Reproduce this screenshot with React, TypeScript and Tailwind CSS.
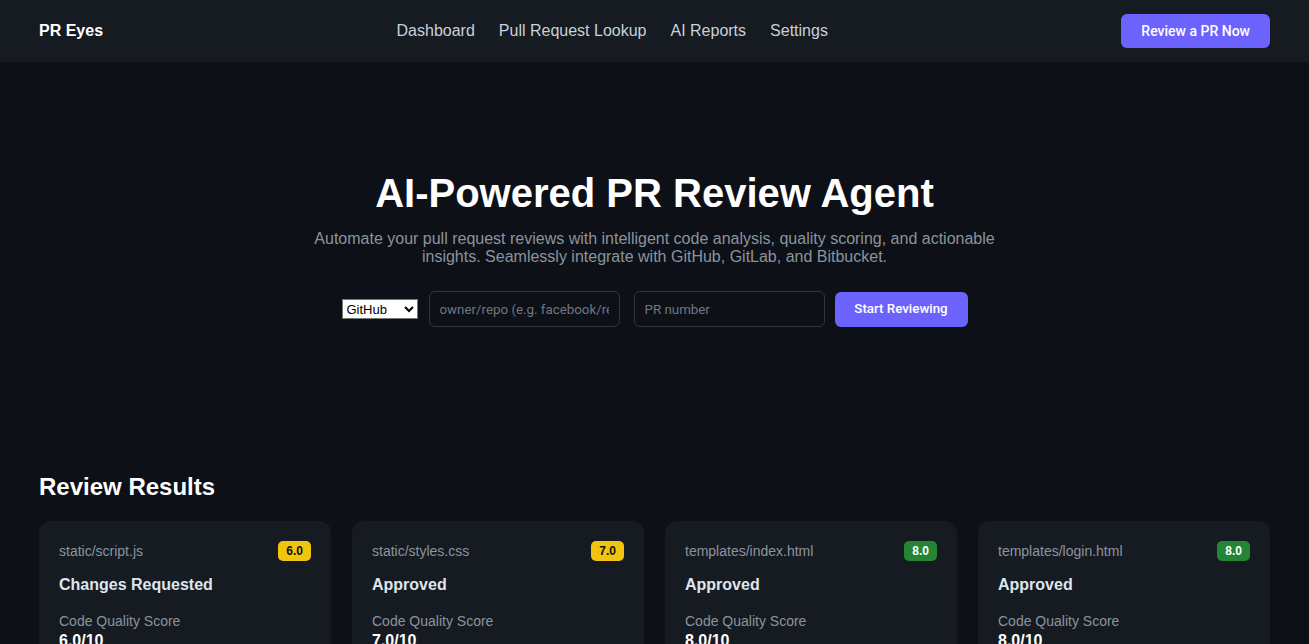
import React from "react";

type Review = {
  file: string;
  score: string;
  status: string;
  tone: "yellow" | "green";
};

const REVIEWS: Review[] = [
  { file: "static/script.js", score: "6.0", status: "Changes Requested", tone: "yellow" },
  { file: "static/styles.css", score: "7.0", status: "Approved", tone: "yellow" },
  { file: "templates/index.html", score: "8.0", status: "Approved", tone: "green" },
  { file: "templates/login.html", score: "8.0", status: "Approved", tone: "green" },
];

const NAV = ["Dashboard", "Pull Request Lookup", "AI Reports", "Settings"];

function ReviewCard({ r }: { r: Review }) {
  return (
    <div className="bg-[#161b22] rounded-xl px-5 pt-5 pb-6">
      <div className="flex items-center justify-between">
        <span className="text-[14px] text-[#8b949e] leading-[20px]">{r.file}</span>
        {r.tone === "yellow" ? (
          <span className="bg-[#f1c40f] text-[#111] text-[12px] font-bold px-[8px] h-[20px] leading-[20px] rounded-[5px]">
            {r.score}
          </span>
        ) : (
          <span className="bg-[#238636] text-white text-[12px] font-bold px-[8px] h-[20px] leading-[20px] rounded-[5px]">
            {r.score}
          </span>
        )}
      </div>
      <div className="mt-[14px] text-[16px] font-bold text-[#dfe5ec] leading-[20px]">{r.status}</div>
      <div className="mt-[17px] text-[14px] text-[#8b949e] leading-[18px]">Code Quality Score</div>
      <div className="mt-[1px] text-[16px] font-bold text-white leading-[20px]">{r.score}/10</div>
    </div>
  );
}

export default function App() {
  return (
    <div className="min-h-screen bg-[#0d1017] text-white font-['Liberation_Sans',Arial,sans-serif]">
      <header className="h-[62px] bg-[#161a21] px-[39px] flex items-center justify-between">
        <div className="text-[16px] font-bold text-white">PR Eyes</div>
        <nav className="flex items-center gap-[24px] text-[16px] text-[#c9d1d9]">
          {NAV.map((n) => (
            <span key={n}>{n}</span>
          ))}
        </nav>
        <button className="bg-[#6c63ff] text-white text-[14px] font-['Roboto',sans-serif] font-medium h-[34px] px-[20px] rounded-[6px]">
          Review a PR Now
        </button>
      </header>

      <section className="flex flex-col items-center pt-[108px] pb-[146px]">
        <h1 className="text-[40px] font-bold leading-[46px] text-white">AI-Powered PR Review Agent</h1>
        <p className="mt-[14px] max-w-[690px] text-center text-[16px] leading-[18px] text-[#8b949e]">
          Automate your pull request reviews with intelligent code analysis, quality scoring, and actionable
          insights. Seamlessly integrate with GitHub, GitLab, and Bitbucket.
        </p>
        <div className="mt-[25px] flex items-center">
          <select className="bg-white text-black border border-[#767676] h-[20px] w-[76px] text-[13px] font-['Liberation_Sans',Arial,sans-serif]">
            <option>GitHub</option>
            <option>GitLab</option>
            <option>Bitbucket</option>
          </select>
          <input
            className="ml-[11px] w-[191px] h-[36px] bg-[#0d1117] border border-[#30363d] rounded-[6px] px-[10px] text-[13.33px] font-['Roboto',sans-serif] text-white placeholder:text-[#6e7681] outline-none"
            placeholder="owner/repo (e.g. facebook/react)"
          />
          <input
            className="ml-[14px] w-[191px] h-[36px] bg-[#0d1117] border border-[#30363d] rounded-[6px] px-[10px] text-[13.33px] font-['Roboto',sans-serif] text-white placeholder:text-[#6e7681] outline-none"
            placeholder="PR number"
          />
          <button className="ml-[10px] w-[133px] h-[35px] bg-[#6c63ff] rounded-[6px] text-[13.33px] font-['Roboto',sans-serif] font-medium text-white">
            Start Reviewing
          </button>
        </div>
      </section>

      <section className="px-[39px]">
        <h2 className="text-[24px] font-bold leading-[28px] text-white">Review Results</h2>
        <div className="mt-[20px] grid grid-cols-4 gap-[21px]">
          {REVIEWS.map((r) => (
            <ReviewCard key={r.file} r={r} />
          ))}
        </div>
      </section>
    </div>
  );
}
